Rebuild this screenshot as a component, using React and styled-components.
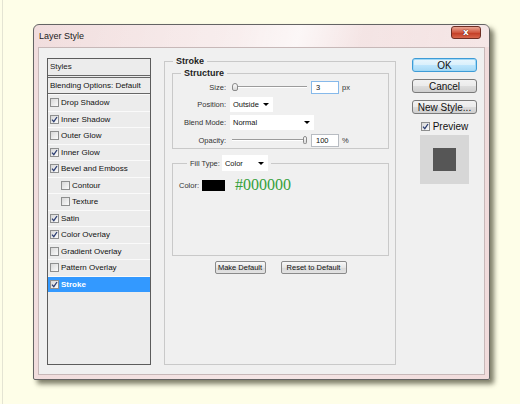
import React from "react";
import styled, { createGlobalStyle } from "styled-components";

const GlobalStyle = createGlobalStyle`
  html, body {
    margin: 0;
    padding: 0;
  }
  body {
    font-family: "Liberation Sans", Arial, sans-serif;
    font-size: 8px;
    color: #111;
  }
`;

const Page = styled.div`
  width: 520px;
  height: 404px;
  box-sizing: border-box;
  padding: 24px 0 0 33px;
  background: linear-gradient(
    to right,
    #fefee8 2px,
    #e4e4d3 2px,
    #e4e4d3 3px,
    #fefee8 3px
  );
  overflow: hidden;
`;

const Window = styled.div`
  width: 457px;
  height: 356px;
  box-sizing: border-box;
  border: 1px solid #646464;
  border-radius: 6px 6px 2px 2px;
  background: linear-gradient(90deg, #f1dddd, #f5e6e6 50%, #f1dcdc);
  box-shadow: 4px 4px 5px rgba(40, 40, 20, 0.6);
  display: flex;
  flex-direction: column;
  padding: 0 4px 4px 4px;
`;

const TitleBar = styled.div`
  height: 22px;
  display: flex;
  align-items: flex-start;
  justify-content: space-between;
  margin: 0 -4px;
  padding-left: 5px;
  border-radius: 5px 5px 0 0;
  background: linear-gradient(
    105deg,
    rgba(255, 255, 255, 0) 0%,
    rgba(255, 255, 255, 0.35) 45%,
    rgba(255, 255, 255, 0.7) 58%,
    rgba(255, 255, 255, 0.1) 72%,
    rgba(255, 255, 255, 0.3) 100%
  );
`;

const Title = styled.span`
  font-size: 9px;
  line-height: 22px;
  color: #1a1a1a;
`;

const CloseButton = styled.div`
  width: 30px;
  height: 13px;
  margin: 1px 8px 0 0;
  box-sizing: border-box;
  border: 1px solid #6e2e24;
  border-radius: 3px;
  background: linear-gradient(#e9a493, #d0573f 50%, #c03a22 51%, #d8664c);
  display: flex;
  align-items: center;
  justify-content: center;
  color: #fff;
  font-family: "DejaVu Sans", sans-serif;
  font-weight: bold;
  font-size: 9px;
  line-height: 1;
  text-shadow: 0 0 1px #5a1a10, 0 0 1px #5a1a10;
`;

const Client = styled.div`
  flex: 1;
  box-sizing: border-box;
  border: 1px solid #c7b8b8;
  background: #f0f0f0;
  display: flex;
  padding: 10px 0 9px 8px;
`;

/* left-hand effect list */

const StyleList = styled.div`
  width: 104px;
  box-sizing: border-box;
  border: 1px solid #5c5c5c;
  background: #ececec;
  display: flex;
  flex-direction: column;
`;

const ListHeader = styled.div`
  height: 19px;
  box-sizing: border-box;
  padding-left: 2px;
  line-height: 16px;
  font-size: 8px;
  color: #222;
  border-bottom: 3px double #666;
`;

const ListBlend = styled.div`
  height: 16px;
  box-sizing: border-box;
  padding-left: 2px;
  line-height: 15px;
  font-size: 8px;
  color: #111;
  border-bottom: 1px solid #666;
`;

const ListRow = styled.div`
  height: 16.5px;
  box-sizing: border-box;
  display: flex;
  align-items: center;
  gap: 2px;
  padding-left: ${(p) => (p.$indent ? 13 : 2)}px;
  border-top: 1px solid #fafafa;
  font-size: 8px;
  background: ${(p) => (p.$selected ? "#3399ff" : "transparent")};
  color: ${(p) => (p.$selected ? "#fff" : "#111")};
  font-weight: ${(p) => (p.$selected ? "bold" : "normal")};
`;

const Box = styled.span`
  width: 9px;
  height: 9px;
  flex: none;
  box-sizing: border-box;
  border: 1px solid #8e8f8f;
  background: linear-gradient(135deg, #d8d8d8, #fbfbfb);
  display: inline-flex;
  align-items: center;
  justify-content: center;
`;

const Check = ({ checked }) => (
  <Box>
    {checked && (
      <svg width="7" height="7" viewBox="0 0 7 7">
        <path
          d="M1 3.6 L2.8 5.6 L6 1"
          fill="none"
          stroke="#2d3f73"
          strokeWidth="1.3"
        />
      </svg>
    )}
  </Box>
);

/* stroke settings */

const Group = styled.fieldset`
  margin: 0;
  padding: 0;
  min-width: 0;
  border: 1px solid #c9c9c9;
`;

const Legend = styled.legend`
  margin-left: ${(p) => p.$inset}px;
  padding: 0 3px;
  font-size: 9px;
  font-weight: bold;
  line-height: 10px;
  color: #1e1e1e;
`;

const StrokeGroup = styled(Group)`
  width: 232px;
  box-sizing: border-box;
  margin: -2px 0 0 13px;
  padding: 2px 6px 0 7px;
`;

const StructureGroup = styled(Group)`
  padding: 2px 0 1px 0;
`;

const FieldGrid = styled.div`
  display: grid;
  grid-template-columns: 53px 1fr;
  grid-template-rows: 14px 15px 15px 14px;
  column-gap: 4px;
  row-gap: 3px;
  align-items: center;
`;

const Label = styled.span`
  text-align: right;
  font-size: 7.5px;
  color: #333;
  white-space: nowrap;
`;

const Controls = styled.div`
  display: flex;
  align-items: center;
  height: 100%;
`;

const Slider = styled.div`
  width: 75px;
  height: 10px;
  margin-left: 2px;
  display: flex;
  align-items: center;
  background: linear-gradient(#9c9c9c, #9c9c9c) 0 4px / 100% 1px no-repeat,
    linear-gradient(#fff, #fff) 0 5px / 100% 1px no-repeat;
`;

const Thumb = styled.span`
  width: 6px;
  height: 8px;
  box-sizing: border-box;
  margin-left: ${(p) => p.$at}px;
  border: 1px solid #8a8a8a;
  border-radius: 3px 3px 2px 2px;
  background: linear-gradient(#fefefe, #d6d6d6);
`;

const NumberBox = styled.span`
  width: 28px;
  height: 13px;
  box-sizing: border-box;
  margin-left: 4px;
  padding-left: 4px;
  border: 1px solid ${(p) => (p.$focus ? "#86b9ea" : "#b8bcc2")};
  background: #fff;
  font-size: 7.5px;
  line-height: 11px;
`;

const Unit = styled.span`
  margin-left: 3px;
  font-size: 7.5px;
  color: #333;
`;

const Select = styled.span`
  width: ${(p) => p.$w}px;
  height: ${(p) => p.$h || 15}px;
  box-sizing: border-box;
  padding: 0 4px 0 3px;
  background: #fff;
  display: flex;
  align-items: center;
  justify-content: space-between;
  font-size: 7.5px;
  font-weight: normal;
  color: #111;
`;

const Caret = styled.span`
  width: 0;
  height: 0;
  border-left: 3px solid transparent;
  border-right: 3px solid transparent;
  border-top: 3px solid #000;
`;

const FillGroup = styled(Group)`
  margin-top: 6px;
  padding: 6px 0 62px 6px;
`;

const FillLegend = styled.legend`
  margin-left: 8px;
  padding: 0 3px;
  display: flex;
  align-items: center;
  gap: 2px;
  font-size: 7.5px;
  color: #333;
`;

const ColorRow = styled.div`
  height: 16px;
  display: flex;
  align-items: center;
  font-size: 7.5px;
  color: #333;
`;

const Swatch = styled.span`
  width: 23px;
  height: 11px;
  margin-left: 3px;
  background: #000;
`;

const HexValue = styled.span`
  margin-left: 10px;
  font-family: "Liberation Serif", "Times New Roman", serif;
  font-size: 16px;
  color: #35a03b;
`;

const DefaultsRow = styled.div`
  display: flex;
  justify-content: center;
  gap: 15px;
  margin-top: 5px;
`;

const SmallButton = styled.span`
  width: ${(p) => p.$w}px;
  height: 13px;
  box-sizing: border-box;
  border: 1px solid #8a8a8a;
  border-radius: 2px;
  background: linear-gradient(#f8f8f8, #e6e6e6 50%, #d9d9d9 51%, #e2e2e2);
  display: flex;
  align-items: center;
  justify-content: center;
  font-size: 7.5px;
  color: #111;
`;

/* right column */

const Actions = styled.div`
  width: 65px;
  margin-left: 16px;
  display: flex;
  flex-direction: column;
  align-items: center;
`;

const DialogButton = styled.span`
  width: 65px;
  height: 14px;
  box-sizing: border-box;
  margin-bottom: 7px;
  border: 1px solid ${(p) => (p.$primary ? "#3d9bd6" : "#7a7a7a")};
  border-radius: 3px;
  background: ${(p) =>
    p.$primary
      ? "linear-gradient(#eaf6fd, #d9f0fc 50%, #bee6fd 51%, #a7d9f5)"
      : "linear-gradient(#f2f2f2, #ebebeb 50%, #dddddd 51%, #cfcfcf)"};
  box-shadow: ${(p) => (p.$primary ? "inset 0 0 0 1px #9fd8f6" : "none")};
  display: flex;
  align-items: center;
  justify-content: center;
  font-size: 10px;
  color: #111;
`;

const PreviewToggle = styled.div`
  display: flex;
  align-items: center;
  gap: 3px;
  height: 10px;
  font-size: 10px;
  color: #111;
`;

const PreviewBox = styled.div`
  width: 49px;
  height: 49px;
  margin-top: 4px;
  margin-right: 1px;
  background: #d7d7d7;
  display: flex;
  align-items: center;
  justify-content: center;
`;

const PreviewChip = styled.div`
  width: 23px;
  height: 23px;
  background: #565656;
`;

const effects = [
  { name: "Drop Shadow", on: false },
  { name: "Inner Shadow", on: true },
  { name: "Outer Glow", on: false },
  { name: "Inner Glow", on: true },
  { name: "Bevel and Emboss", on: true },
  { name: "Contour", on: false, sub: true },
  { name: "Texture", on: false, sub: true },
  { name: "Satin", on: true },
  { name: "Color Overlay", on: true },
  { name: "Gradient Overlay", on: false },
  { name: "Pattern Overlay", on: false },
  { name: "Stroke", on: true, selected: true },
];

const App = () => (
  <Page>
    <GlobalStyle />
    <Window>
      <TitleBar>
        <Title>Layer Style</Title>
        <CloseButton>x</CloseButton>
      </TitleBar>
      <Client>
        <StyleList>
          <ListHeader>Styles</ListHeader>
          <ListBlend>Blending Options: Default</ListBlend>
          {effects.map((fx) => (
            <ListRow key={fx.name} $indent={fx.sub} $selected={fx.selected}>
              <Check checked={fx.on} />
              {fx.name}
            </ListRow>
          ))}
        </StyleList>

        <StrokeGroup>
          <Legend $inset={1}>Stroke</Legend>
          <StructureGroup>
            <Legend $inset={8}>Structure</Legend>
            <FieldGrid>
              <Label>Size:</Label>
              <Controls>
                <Slider>
                  <Thumb $at={0} />
                </Slider>
                <NumberBox $focus>3</NumberBox>
                <Unit>px</Unit>
              </Controls>
              <Label>Position:</Label>
              <Controls>
                <Select $w={43}>
                  Outside
                  <Caret />
                </Select>
              </Controls>
              <Label>Blend Mode:</Label>
              <Controls>
                <Select $w={84}>
                  Normal
                  <Caret />
                </Select>
              </Controls>
              <Label>Opacity:</Label>
              <Controls>
                <Slider>
                  <Thumb $at={71} />
                </Slider>
                <NumberBox>100</NumberBox>
                <Unit>%</Unit>
              </Controls>
            </FieldGrid>
          </StructureGroup>

          <FillGroup>
            <FillLegend>
              Fill Type:
              <Select $w={46} $h={16}>
                Color
                <Caret />
              </Select>
            </FillLegend>
            <ColorRow>
              Color:
              <Swatch />
              <HexValue>#000000</HexValue>
            </ColorRow>
          </FillGroup>

          <DefaultsRow>
            <SmallButton $w={51}>Make Default</SmallButton>
            <SmallButton $w={66}>Reset to Default</SmallButton>
          </DefaultsRow>
        </StrokeGroup>

        <Actions>
          <DialogButton $primary>OK</DialogButton>
          <DialogButton>Cancel</DialogButton>
          <DialogButton>New Style...</DialogButton>
          <PreviewToggle>
            <Check checked />
            Preview
          </PreviewToggle>
          <PreviewBox>
            <PreviewChip />
          </PreviewBox>
        </Actions>
      </Client>
    </Window>
  </Page>
);

export default App;
